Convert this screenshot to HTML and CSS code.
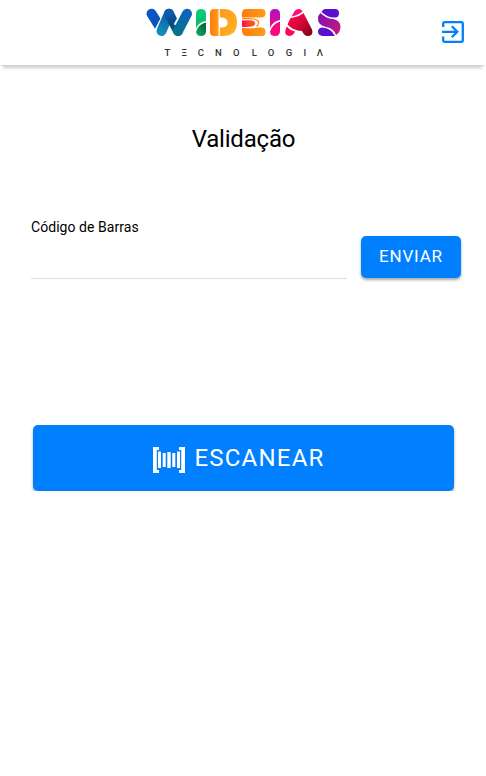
FILE: index.html
```html
<!DOCTYPE html>
<html lang="pt-BR">
<head>
    <meta charset="UTF-8">
    <meta name="viewport" content="width=device-width, initial-scale=1.0">
    <title>Validação</title>
    <link rel="stylesheet" href="styles.css">
</head>
<body>
    <header class="toolbar">
        <svg class="logo" width="200" height="56" viewBox="144 4 200 56" role="img" aria-label="Wideias Tecnologia">
            <defs>
                <linearGradient id="w1" gradientUnits="userSpaceOnUse" x1="150" y1="10" x2="163" y2="32">
                    <stop offset="0" stop-color="#0b57c8"/>
                    <stop offset="1" stop-color="#0d50a4"/>
                </linearGradient>
                <linearGradient id="w2" gradientUnits="userSpaceOnUse" x1="169" y1="12" x2="180" y2="34">
                    <stop offset="0" stop-color="#0a5cae"/>
                    <stop offset="0.5" stop-color="#084a80"/>
                    <stop offset="1" stop-color="#075a80"/>
                </linearGradient>
                <linearGradient id="w3" gradientUnits="userSpaceOnUse" x1="188" y1="12" x2="180" y2="34">
                    <stop offset="0" stop-color="#0b62c0"/>
                    <stop offset="1" stop-color="#077487"/>
                </linearGradient>
                <linearGradient id="w4" gradientUnits="userSpaceOnUse" x1="170" y1="12" x2="162" y2="34">
                    <stop offset="0" stop-color="#0a5cae"/>
                    <stop offset="1" stop-color="#0e8fb8"/>
                </linearGradient>
                <linearGradient id="green" x1="0" y1="0" x2="0" y2="1">
                    <stop offset="0" stop-color="#05d07c"/>
                    <stop offset="1" stop-color="#0bb568"/>
                </linearGradient>
                <linearGradient id="green-dark" x1="1" y1="0" x2="0" y2="1">
                    <stop offset="0" stop-color="#075c38"/>
                    <stop offset="1" stop-color="#11b061"/>
                </linearGradient>
                <linearGradient id="orange" x1="0" y1="0" x2="1" y2="1">
                    <stop offset="0" stop-color="#ff9a1a"/>
                    <stop offset="1" stop-color="#ffb428"/>
                </linearGradient>
                <linearGradient id="amber" x1="0" y1="0" x2="1" y2="0">
                    <stop offset="0" stop-color="#ff7a10"/>
                    <stop offset="1" stop-color="#ff9c16"/>
                </linearGradient>
                <linearGradient id="fire" x1="0" y1="0" x2="1" y2="0">
                    <stop offset="0" stop-color="#fb0a4d"/>
                    <stop offset="1" stop-color="#ff6a1c"/>
                </linearGradient>
                <linearGradient id="pink" x1="0" y1="0" x2="0" y2="1">
                    <stop offset="0" stop-color="#b00fc4"/>
                    <stop offset="1" stop-color="#f20a86"/>
                </linearGradient>
                <linearGradient id="red" x1="0" y1="0" x2="1" y2="1">
                    <stop offset="0" stop-color="#ff0b50"/>
                    <stop offset="0.5" stop-color="#d80638"/>
                    <stop offset="1" stop-color="#750014"/>
                </linearGradient>
                <linearGradient id="purple" x1="0" y1="0" x2="1" y2="1">
                    <stop offset="0" stop-color="#7c0cc2"/>
                    <stop offset="1" stop-color="#d01c6c"/>
                </linearGradient>
            </defs>
            <!-- W -->
            <g fill="none" stroke-width="10" stroke-linecap="round">
                <path stroke="url(#w1)" d="M151.500 13.700 160.500 28"/>
                <path stroke="#fff" stroke-width="12" stroke-linecap="butt" d="M168 17 159 34"/>
                <path stroke="url(#w4)" d="M169 13.700 161.500 31"/>
                <path stroke="url(#w2)" d="M169 13.700 178 31"/>
                <path stroke="#fff" stroke-width="12" stroke-linecap="butt" d="M185 16 179 27"/>
                <path stroke="url(#w3)" d="M187 13.700 178 31"/>
            </g>
            <!-- I -->
            <path fill="url(#green)" d="M196 28V14Q196 9 201 9T206 14V21Q199 22 196 28Z"/>
            <path fill="url(#green-dark)" d="M196 32Q198 24 206 22.500V31Q206 36 201 36T196 31Z"/>
            <!-- D -->
            <path fill="url(#amber)" d="M210 13Q210 9 214 9H218.500V36H214Q210 36 210 32Z"/>
            <path fill="url(#orange)" d="M219.800 9H223Q237 9 237 22.500T223 36H219.800V27.500Q227.500 28 227.500 22.500T219.800 17.500Z"/>
            <!-- E -->
            <path fill="url(#amber)" d="M246 9H261.500Q265.500 9 265.500 13.200T261.500 17.500H242Q241 9 246 9Z"/>
            <path fill="url(#fire)" d="M242 20.500Q252 19.500 254.500 21.500Q256.500 24 253.500 26Q251 27 242 27Z"/>
            <path fill="none" stroke="#ff8a18" stroke-width="1.300" d="M242 18.700Q255 18 257.500 20.500Q260 23.500 256.500 26.500"/>
            <path fill="url(#amber)" d="M242 28Q255 28.500 259 27.500H261.500Q265.500 27.500 265.500 32T261.500 36H246Q241.500 36 242 28Z"/>
            <!-- I -->
            <path fill="url(#pink)" d="M270 28V14Q270 9 275 9T280 14V20Q273 21 270 28Z"/>
            <path fill="#fb087b" d="M270 31.500Q273 23.500 280 21.500V31Q280 36 275 36T270 31.500Z"/>
            <!-- A -->
            <path fill="#ff0b7c" d="M293 14Q295 9 299 9Q301.500 9 302.500 11.500Q298 15.500 291.500 16.500Z"/>
            <path fill="url(#red)" d="M290.500 18Q299 17 303.500 13L312 29.500Q314 36 308 36Q304 36 302 31Q293 31 287.500 24.500Z"/>
            <path fill="#ff0758" d="M286.800 26.500Q290 30.500 295 31.500Q293 36 289 36Q282.500 35 286.800 26.500Z"/>
            <!-- S -->
            <path fill="#5b10d0" d="M325 9H335Q339 9 339 13.200T335 17.500Q328 18 321.500 12Q323 9 325 9Z"/>
            <path fill="url(#purple)" d="M320.500 13Q326 18.500 333 19Q340.500 20.500 340.500 27Q340 33 336 35Q334 28.500 326 27Q318 25 318 19Q318 15 320.500 13Z"/>
            <path fill="#5811cf" d="M322 27.500Q331.500 28 334.800 36H322Q318 35 318 31.500T322 27.500Z"/>
            <text class="logo-sub" y="56" x="167.300 184.200 200.800 218.300 236.300 254.300 271 289 304.800 319.800">TΞCNOLOGIΛ</text>
        </svg>
        <svg class="exit" width="22" height="22" viewBox="0 0 22 22" fill="none" stroke="#0080ff" stroke-width="2.300">
            <path d="M1.200 6V2.700Q1.200 1.200 2.700 1.200H19.300Q20.800 1.200 20.800 2.700V19.300Q20.800 20.800 19.300 20.800H2.700Q1.200 20.800 1.200 19.300V15.500"/>
            <path d="M0 10.800H15M9.800 5.300 15.300 10.800 9.800 16.300"/>
        </svg>
    </header>
    <main class="content">
        <h1>Validação</h1>
        <form class="form-row">
            <div class="field">
                <label for="codigo">Código de Barras</label>
                <input type="text" id="codigo">
            </div>
            <button type="button" class="btn btn-send">Enviar</button>
        </form>
        <button type="button" class="btn btn-scan">
            <svg width="32" height="26" viewBox="0 0 32 26">
                <path fill="#fff" d="M0 0H6V3H3.800V23H6V26H0ZM32 0H26V3H28.200V23H26V26H32ZM5 4.500H8V21H5ZM9.700 6H12.700V20H9.700ZM14.300 5H17.700V21H14.300ZM19.300 6H22.300V20H19.300ZM24 4.500H27V21H24Z"/>
            </svg>
            <span>Escanear</span>
        </button>
    </main>
</body>
</html>
```
FILE: styles.css
```css
* {
    box-sizing: border-box;
}
body {
    margin: 0;
    background: #fff;
    color: #000;
    font-family: Roboto, sans-serif;
}
.toolbar {
    display: grid;
    grid-template-columns: 1fr 200px 1fr;
    height: 66px;
    margin: 0 2px 0 1px;
    padding: 4px 0 0 3px;
    border-bottom: 1px solid #d4d4d4;
    box-shadow: 0 4px 3px -2px rgba(0, 0, 0, 0.2);
}
.logo {
    grid-column: 2;
    display: block;
}
.logo-sub {
    font-size: 9.5px;
    font-weight: 500;
    fill: #333;
    text-anchor: middle;
}
.exit {
    justify-self: end;
    margin: 17px 20px 0 0;
}
.content {
    padding: 57px 25px 0 31px;
}
h1 {
    margin: 0 5px 0 0;
    font-size: 24px;
    font-weight: 400;
    line-height: 32px;
    letter-spacing: -0.2px;
    text-align: center;
}
.form-row {
    display: flex;
    gap: 14px;
    margin-top: 63px;
}
.field {
    flex: 1;
}
.field label {
    display: block;
    font-size: 14px;
    line-height: 18px;
    letter-spacing: 0.05px;
}
.field input {
    display: block;
    width: 100%;
    height: 43px;
    border: none;
    border-bottom: 1px solid #dedede;
    outline: none;
    background: none;
}
.btn {
    display: flex;
    justify-content: center;
    align-items: center;
    padding: 0;
    border: none;
    border-radius: 5px;
    background: #0080ff;
    color: #fff;
    font-family: inherit;
    text-transform: uppercase;
    box-shadow: 0 2px 3px rgba(0, 0, 0, 0.35);
}
.btn-send {
    width: 100px;
    height: 42px;
    margin-top: 18px;
    padding-bottom: 2px;
    font-size: 17px;
    letter-spacing: 0.8px;
}
.btn-scan {
    gap: 10px;
    width: 421px;
    height: 66px;
    margin: 146px 0 0 2px;
    padding-right: 10px;
    font-size: 24px;
    letter-spacing: 1.2px;
}
.btn-scan svg {
    margin-top: 3px;
}
```
